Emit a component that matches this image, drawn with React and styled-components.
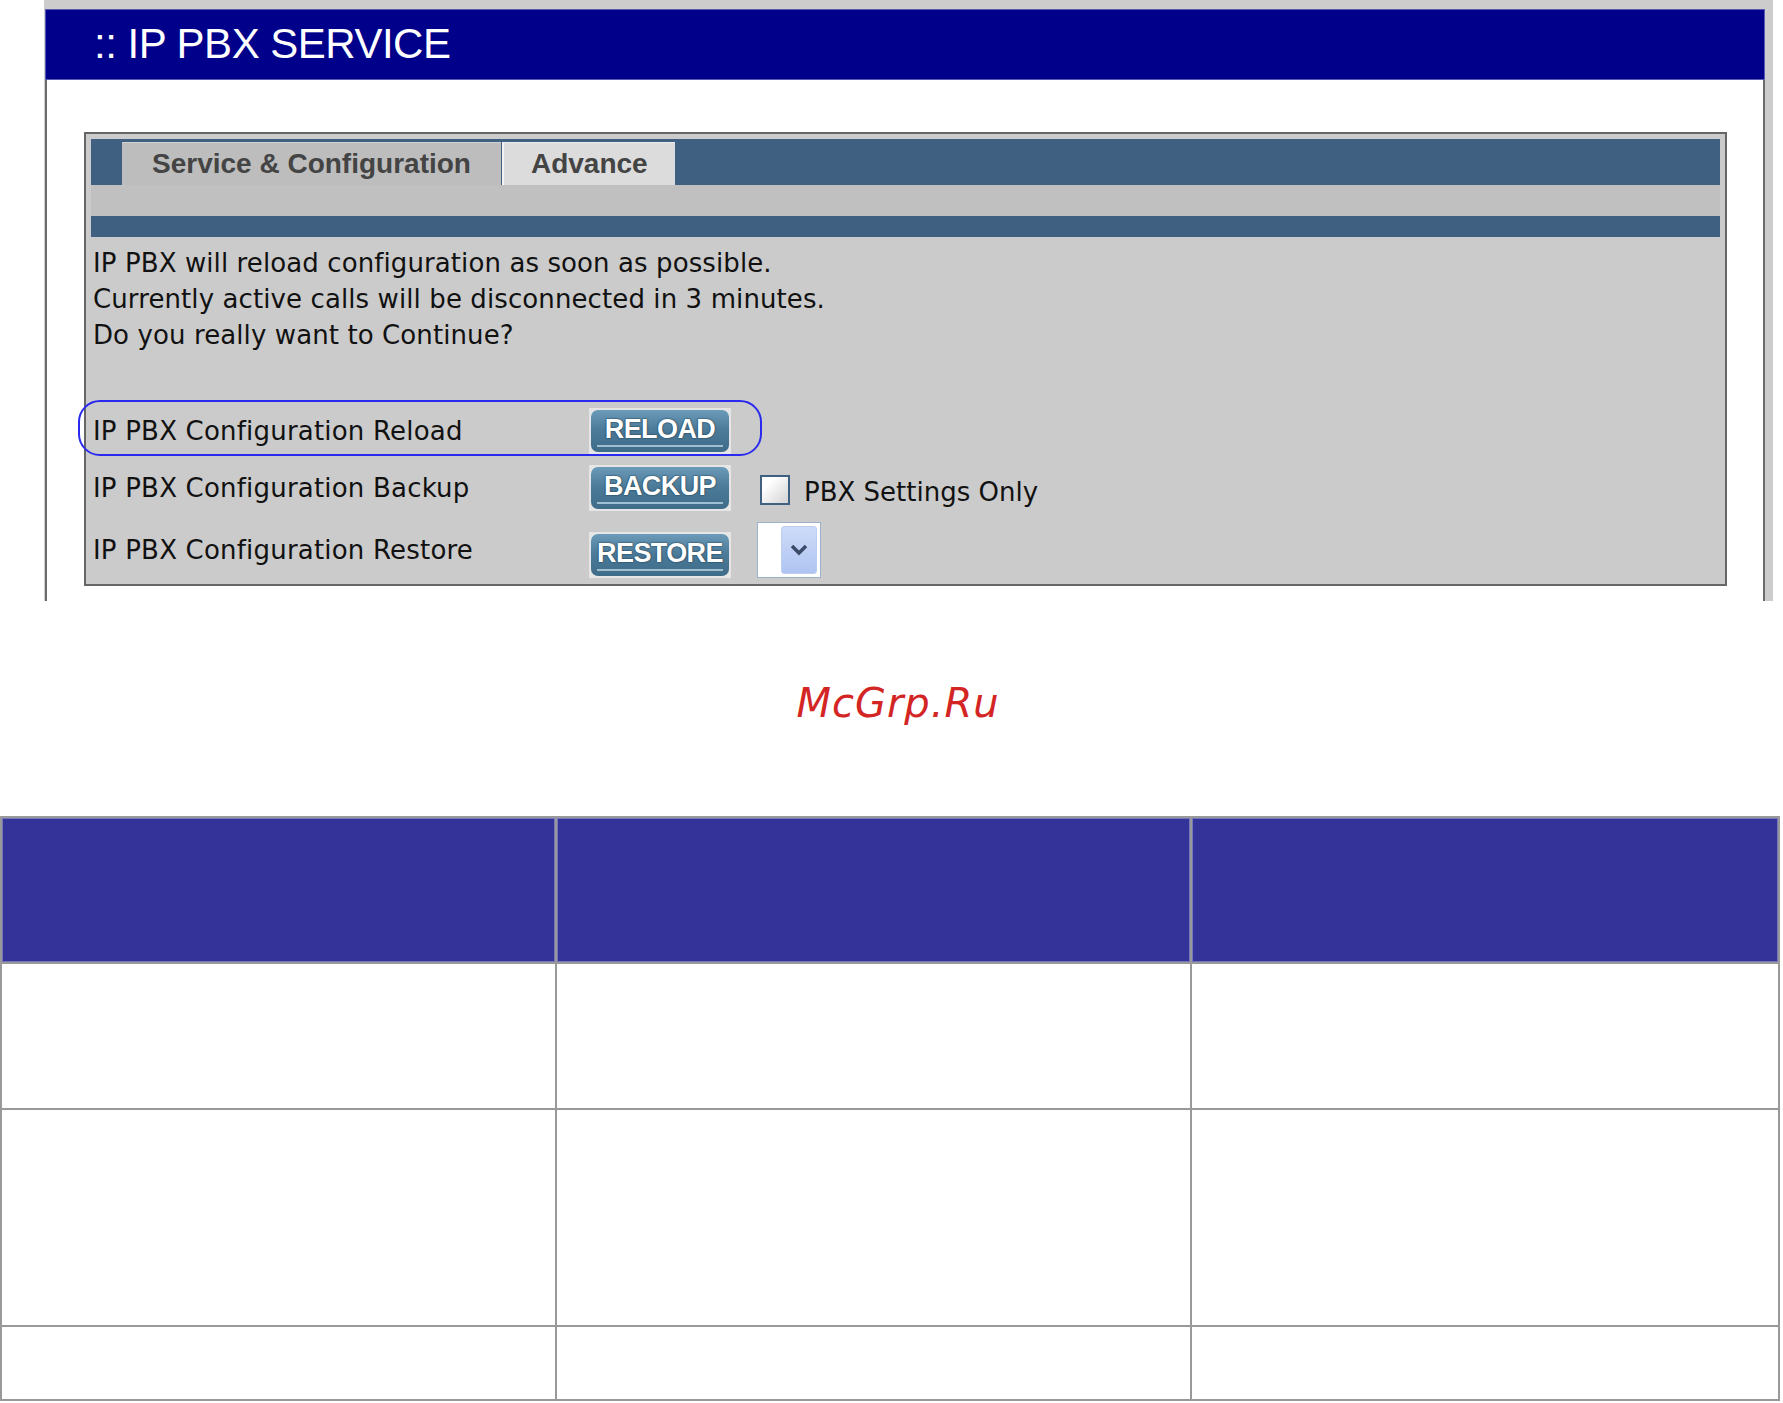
import React from 'react';
import styled, { createGlobalStyle } from 'styled-components';

const GlobalStyle = createGlobalStyle`
	body {
		margin: 0;
		background: #ffffff;
		font-family: 'DejaVu Sans', 'Liberation Sans', sans-serif;
	}
	* {
		box-sizing: border-box;
	}
`;

const rows = [
	{ label: 'IP PBX Configuration Reload', button: 'RELOAD', extra: 'outline' },
	{ label: 'IP PBX Configuration Backup', button: 'BACKUP', extra: 'checkbox' },
	{ label: 'IP PBX Configuration Restore', button: 'RESTORE', extra: 'select' },
];

const tableRows = [146, 146, 217, 74];

const App = () => {
	return (
		<Page>
			<GlobalStyle />
			<TopFrame>
				<Header>:: IP PBX SERVICE</Header>
				<Panel>
					<Box>
						<TabBar>
							<Tab active>Service &amp; Configuration</Tab>
							<Tab>Advance</Tab>
						</TabBar>
						<GapStrip />
						<BlueBar />
						<Message>
							<div>IP PBX will reload configuration as soon as possible.</div>
							<div>Currently active calls will be disconnected in 3 minutes.</div>
							<div>Do you really want to Continue?</div>
						</Message>
						<Rows>
							{rows.map(row => (
								<Row key={row.button} tall={row.extra === 'select'}>
									{row.extra === 'outline' && <Outline />}
									<Label>{row.label}</Label>
									<ActionButton low={row.extra === 'select'}>
										<Face>{row.button}</Face>
									</ActionButton>
									{row.extra === 'checkbox' && (
										<>
											<Check />
											<CheckLabel>PBX Settings Only</CheckLabel>
										</>
									)}
									{row.extra === 'select' && (
										<Select>
											<SelectButton>
												<svg width='18' height='12' viewBox='0 0 18 12'>
													<path d='M2 2 L9 9 L16 2' fill='none' stroke='#3b4a68' strokeWidth='3.5' />
												</svg>
											</SelectButton>
										</Select>
									)}
								</Row>
							))}
						</Rows>
					</Box>
				</Panel>
			</TopFrame>
			<Watermark>McGrp.Ru</Watermark>
			<Table>
				{tableRows.map((h, r) =>
					[0, 1, 2].map(c => <Cell key={r + '-' + c} head={r === 0} style={{ height: h }} />)
				)}
			</Table>
		</Page>
	);
};

const Page = styled.div`
	width: 1783px;
`;

const TopFrame = styled.div`
	margin-left: 44px;
	width: 1729px;
	background: #cccccc;
	padding: 9px 8px 0 1px;
`;

const Header = styled.div`
	height: 71px;
	background: #00008b;
	box-shadow: inset 0 0 0 1px #5a5ab4;
	color: #ffffff;
	font-family: 'Liberation Sans', Arial, sans-serif;
	font-size: 42px;
	letter-spacing: -0.5px;
	line-height: 70px;
	padding-left: 49px;
`;

const Panel = styled.div`
	height: 521px;
	background: #ffffff;
	border-left: 2px solid #6b6b6b;
	border-right: 2px solid #6b6b6b;
	padding: 52px 36px 0 37px;
`;

const Box = styled.div`
	height: 454px;
	background: #cbcbcb;
	border: 2px solid #666666;
	padding: 5px 5px 0;
`;

const TabBar = styled.div`
	height: 46px;
	background: #3f6080;
	display: flex;
	align-items: flex-end;
	gap: 1px;
	padding-left: 31px;
`;

const Tab = styled.div`
	height: 43px;
	padding: ${p => (p.active ? '0 30px' : '0 27px 0 27px')};
	display: flex;
	align-items: center;
	background: ${p => (p.active ? '#bdbdbd' : '#dcdcdc')};
	border-top: 1px solid ${p => (p.active ? '#d0d0d0' : '#ececec')};
	border-left: ${p => (p.active ? 'none' : '2px solid #f2f2f2')};
	color: #444444;
	font-family: 'Liberation Sans', Arial, sans-serif;
	font-weight: 700;
	font-size: 28px;
`;

const GapStrip = styled.div`
	height: 31px;
	background: #c0c0c0;
`;

const BlueBar = styled.div`
	height: 21px;
	background: #3f6080;
`;

const Message = styled.div`
	margin-top: 8px;
	padding-left: 2px;
	font-size: 26px;
	letter-spacing: 0.1px;
	line-height: 36px;
	color: #111111;
`;

const Rows = styled.div`
	margin-top: 55px;
	display: flex;
	flex-direction: column;
	gap: 11px;
`;

const Row = styled.div`
	position: relative;
	height: ${p => (p.tall ? '56px' : '46px')};
	display: flex;
	align-items: center;
`;

const Outline = styled.div`
	position: absolute;
	left: -13px;
	top: -8px;
	width: 684px;
	height: 56px;
	border: 2px solid #2a2aee;
	border-radius: 22px;
	pointer-events: none;
`;

const Label = styled.div`
	width: 498px;
	padding-left: 2px;
	font-size: 26px;
	letter-spacing: 0.2px;
	color: #111111;
`;

const ActionButton = styled.button`
	width: 142px;
	height: 46px;
	padding: 2px;
	border: none;
	background: #e6e6e6;
	cursor: pointer;
	align-self: ${p => (p.low ? 'flex-end' : 'center')};
`;

const Face = styled.span`
	position: relative;
	display: flex;
	align-items: center;
	justify-content: center;
	height: 100%;
	border-radius: 7px;
	background: linear-gradient(#6b9bb9, #4c7c9a 45%, #3e6b88);
	color: #ffffff;
	font-family: 'Liberation Sans', Arial, sans-serif;
	font-weight: 700;
	font-size: 27px;
	letter-spacing: -0.6px;
	text-shadow: 0 0 2px #1d3b50, 0 0 1px #1d3b50;
	padding-bottom: 3px;
	&::after {
		content: '';
		position: absolute;
		left: 6px;
		right: 6px;
		bottom: 5px;
		height: 2px;
		background: #9fc0d2;
	}
`;

const Check = styled.span`
	width: 30px;
	height: 30px;
	margin: 4px 0 0 29px;
	border: 2px solid #3f6080;
	background: linear-gradient(135deg, #ffffff 25%, #d2d2d2);
`;

const CheckLabel = styled.span`
	margin-left: 14px;
	font-size: 26px;
	color: #111111;
	padding-top: 8px;
`;

const Select = styled.div`
	margin-left: 26px;
	width: 64px;
	height: 56px;
	background: #ffffff;
	border: 1px solid #9ab2cc;
	padding: 3px;
	display: flex;
	justify-content: flex-end;
`;

const SelectButton = styled.div`
	width: 36px;
	height: 100%;
	border-radius: 3px;
	border: 1px solid #bccdf0;
	background: linear-gradient(#cddbf8, #afc4f1);
	display: flex;
	align-items: center;
	justify-content: center;
`;

const Watermark = styled.div`
	height: 215px;
	display: flex;
	align-items: center;
	justify-content: center;
	padding: 0 0 12px 13px;
	color: #d42525;
	font-family: 'DejaVu Sans', sans-serif;
	font-style: oblique;
	font-size: 40px;
	letter-spacing: 1px;
`;

const Table = styled.div`
	width: 1780px;
	display: grid;
	grid-template-columns: 555px 635px 588px;
	border-top: 2px solid #999999;
	border-left: 2px solid #999999;
`;

const Cell = styled.div`
	border-right: 2px solid #999999;
	border-bottom: 2px solid #999999;
	background: ${p => (p.head ? '#333399' : '#ffffff')};
	box-shadow: ${p => (p.head ? 'inset 0 0 0 1px #7676bc' : 'none')};
`;

export default App;
